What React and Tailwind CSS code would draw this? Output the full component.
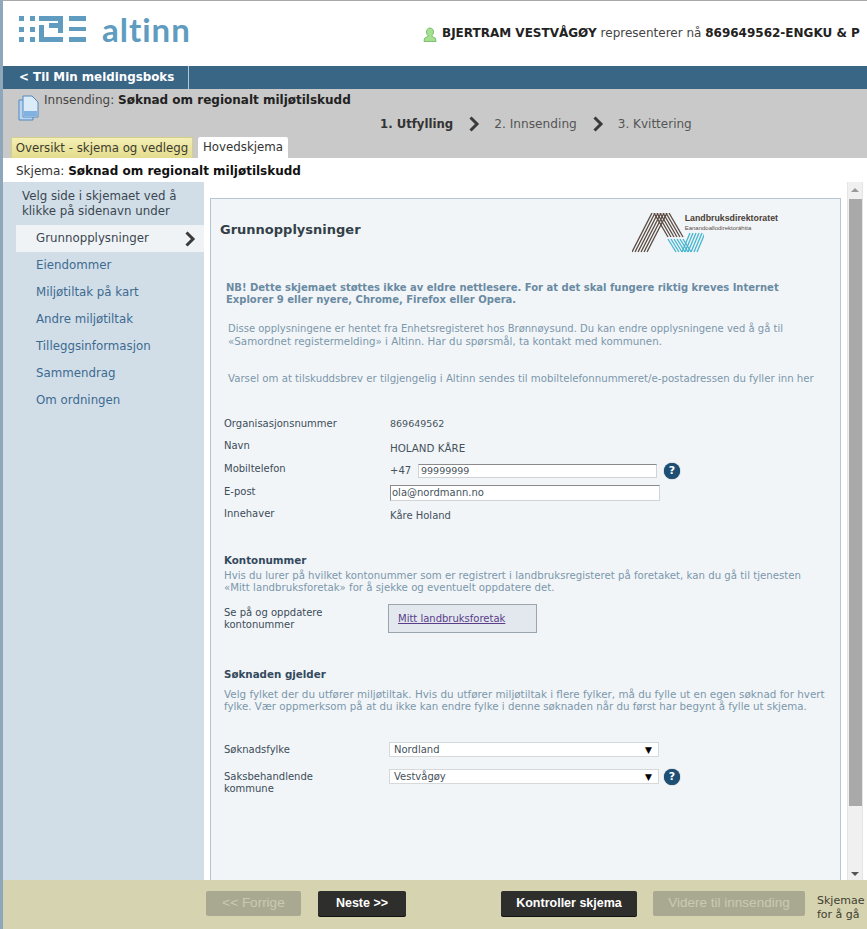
import React from "react";

const menu = ["Eiendommer", "Miljøtiltak på kart", "Andre miljøtiltak", "Tilleggsinformasjon", "Sammendrag", "Om ordningen"];

function AltinnMark() {
    return (
        <svg width="67" height="26" viewBox="0 0 67 26" fill="#5f9cbf">
            {[0, 11, 21].map((y) => (
                <g key={y}>
                    <rect x="0" y={y} width="5" height="5" />
                    <rect x="11" y={y} width="5" height="5" />
                </g>
            ))}
            <path d="M20 0h24v17h-5v-5h-9V7h9V5H20zM20 9h5v12h19v5H20z" />
            <rect x="50" y="0" width="17" height="5" />
            <rect x="50" y="11" width="17" height="4" />
            <rect x="50" y="21" width="17" height="5" />
        </svg>
    );
}

function DirektoratMark() {
    const strands = [0, 1, 2, 3, 4, 5];
    return (
        <svg className="shrink-0" width="72" height="40" viewBox="0 0 72 40" fill="none">
            {strands.map((i) => (
                <line key={"a" + i} x1={i * 3} y1="39" x2={20 + i * 3} y2="0" stroke="#5a4a40" strokeWidth="1.3" />
            ))}
            {strands.map((i) => (
                <line key={"b" + i} x1={22 + i * 3} y1="0" x2={36 + i * 3} y2="24" stroke="#5a4a40" strokeWidth="1.3" />
            ))}
            {strands.map((i) => (
                <line key={"c" + i} x1={36 + i * 3} y1="26" x2={44 + i * 3} y2="39" stroke="#45b5cf" strokeWidth="1.3" />
            ))}
            {strands.map((i) => (
                <line key={"d" + i} x1={50 + i * 3} y1="39" x2={58 + i * 3} y2="20" stroke="#45b5cf" strokeWidth="1.3" />
            ))}
        </svg>
    );
}

function Chevron({ className }) {
    return (
        <svg className={`shrink-0 ${className}`} width="12" height="16" viewBox="0 0 12 16" fill="none">
            <path d="M2.500 1.500 9 8l-6.500 6.500" stroke="#3a3a3a" strokeWidth="3" />
        </svg>
    );
}

function HelpIcon() {
    return (
        <span className="flex h-[16px] w-[16px] items-center justify-center rounded-full bg-[#1d4f74] text-[11px] font-bold text-white shadow-[0_0_1px_#0b2c44]">
            ?
        </span>
    );
}

function Row({ label, className, children }) {
    return (
        <div className={`-ml-[2px] flex ${className}`}>
            <div className="w-[166px] shrink-0 text-[10px] leading-[12px] text-[#3d4c59]">{label}</div>
            <div className="flex-1">{children}</div>
        </div>
    );
}

function SelectBox({ value }) {
    return (
        <div className="flex h-[15px] w-[270px] items-center justify-between border border-[#d5d9dc] bg-white pl-[4px] pr-[6px] text-[10px] text-[#46525c]">
            <span>{value}</span>
            <span className="text-[9px] text-black">▼</span>
        </div>
    );
}

function Button({ children, dark, className }) {
    return (
        <div
            className={`mt-[11px] flex h-[25px] shrink-0 items-center justify-center rounded-[2px] font-['Liberation_Sans',sans-serif] ${className} ${
                dark ? "bg-[#2e2e2c] text-[12.5px] font-bold text-white shadow-[0_1px_0_#111]" : "bg-[#a9a992] text-[13.500px] text-[#c9c9b3]"
            }`}
        >
            {children}
        </div>
    );
}

export default function App() {
    return (
        <div className="flex h-[929px] w-[867px] flex-col overflow-hidden border-l-[3px] border-t-[1px] border-l-[#8fa7bb] border-t-[#a8a8a8] bg-white font-['DejaVu_Sans',sans-serif] text-[11px]">
            {/* Header */}
            <div className="flex h-[65px] shrink-0 items-start whitespace-nowrap">
                <div className="flex w-[420px] shrink-0 items-start">
                    <div className="ml-[16px] mt-[15px]">
                        <AltinnMark />
                    </div>
                    <span className="ml-[16px] mt-[8px] font-['Lato',sans-serif] text-[33px] font-bold leading-[40px] tracking-[1px] text-[#5f9cbf]">
                        altinn
                    </span>
                </div>
                <svg className="mt-[26px] shrink-0" width="14" height="15" viewBox="0 0 14 15">
                    <path d="M7 1c2.400 0 3.500 1.800 3.500 4 0 1.600-.7 2.800-1.400 3.400v1l3.400 1.800.5 3.300H1l.5-3.300 3.400-1.800v-1C4.200 7.800 3.500 6.600 3.500 5c0-2.200 1.100-4 3.500-4z" fill="#a5e092" stroke="#6cb35a" strokeWidth=".8" />
                </svg>
                <div className="ml-[5px] mt-[25px] text-[12px] leading-[15px] text-[#444]">
                    <b className="text-[#222]">BJERTRAM VESTVÅGØY</b> representerer nå <b className="text-[#222]">869649562-ENGKU &amp; P</b>
                </div>
            </div>

            {/* Blue bar */}
            <div className="flex h-[23px] shrink-0 items-stretch bg-[#3a6686] pl-[1px]">
                <div className="flex w-[185px] items-center border-r border-[#b7c8d5] pl-[15px] pt-[1px] text-[11.85px] font-bold text-white">
                    &lt; Til Min meldingsboks
                </div>
            </div>

            {/* Gray band */}
            <div className="flex h-[69px] shrink-0 flex-col justify-between bg-[#c9c9c9]">
                <div className="flex">
                    <svg className="ml-[15px] mt-[6px] shrink-0" width="22" height="26" viewBox="0 0 22 26" fill="none">
                        <path d="M1 5h10l4 4v16H1z" fill="#b9d6f0" stroke="#5088bd" />
                        <path d="M5 1h9l6 6v15H5z" fill="#dcebf8" stroke="#5088bd" />
                        <rect x="6" y="16" width="13" height="5" fill="#7fb2e0" />
                    </svg>
                    <div className="ml-[4px] mt-[4px] text-[12px] leading-[15px] text-[#444]">
                        <div>
                            Innsending: <b className="text-[#222]">Søknad om regionalt miljøtilskudd</b>
                        </div>
                        <div className="ml-[336px] mt-[8px] flex h-[16px] items-center text-[#555]">
                            <b className="text-[11.7px] text-[#333]">1. Utfylling</b>
                            <Chevron className="ml-[15px] mr-[14px]" />
                            <span className="text-[12.2px]">2. Innsending</span>
                            <Chevron className="ml-[15px] mr-[14px]" />
                            <span>3. Kvittering</span>
                        </div>
                    </div>
                </div>
                <div className="flex h-[21px] items-end gap-[5px] pl-[8px] text-[11.8px] leading-[15px]">
                    <div className="flex h-[21px] w-[182px] items-center justify-center rounded-t-[2px] border border-b-0 border-[#d6cf8a] bg-gradient-to-b from-[#f4efb4] to-[#e4dc8e] text-[#3c3c2e]">
                        Oversikt - skjema og vedlegg
                    </div>
                    <div className="flex h-[21px] w-[90px] items-center justify-center rounded-t-[2px] bg-white text-[#333]">
                        Hovedskjema
                    </div>
                </div>
            </div>

            {/* Schema title */}
            <div className="flex h-[24px] shrink-0 items-center pl-[13px] pt-[1px] text-[12px] text-[#333]">
                <span>
                    Skjema: <b className="text-[#111]">Søknad om regionalt miljøtilskudd</b>
                </span>
            </div>

            {/* Main */}
            <div className="flex min-h-0 flex-1">
                {/* Sidebar */}
                <div className="w-[201px] shrink-0 bg-[#d1dee8] pt-[7px] text-[11.8px]">
                    <div className="pl-[19px] leading-[15px] text-[#3b4650]">
                        Velg side i skjemaet ved å
                        <br />
                        klikke på sidenavn under
                    </div>
                    <div className="ml-[13px] mt-[6px] flex h-[27px] items-center justify-between bg-[#f0f3f6] pl-[20px] pr-[8px] text-[#3b4650]">
                        <span>Grunnopplysninger</span>
                        <Chevron />
                    </div>
                    {menu.map((item) => (
                        <div key={item} className="flex h-[27px] items-center pl-[33px] text-[#3d6a90]">
                            {item}
                        </div>
                    ))}
                </div>

                {/* Form panel */}
                <div className="ml-[6px] mt-[16px] w-[631px] shrink-0 border border-b-0 border-[#b5c7d4] bg-[#f1f5f8] pl-[15px] text-[10px] leading-[12px]">
                    <div className="flex h-[63px] items-start justify-between pr-[62px]">
                        <div className="-ml-[6px] mt-[23px] text-[13px] font-bold leading-[16px] text-[#333f47]">Grunnopplysninger</div>
                        <div className="mt-[14px] flex">
                            <DirektoratMark />
                            <div className="-ml-[19px] whitespace-nowrap font-['Liberation_Sans',sans-serif]">
                                <div className="text-[8.8px] font-bold leading-[11px] text-[#4a3d36]">Landbruksdirektoratet</div>
                                <div className="text-[6px] leading-[8px] text-[#5c4f48]">Eanandoallodirektoráhtta</div>
                            </div>
                        </div>
                    </div>

                    <div className="mt-[20px] font-bold text-[#6a8aa2]">
                        NB! Dette skjemaet støttes ikke av eldre nettlesere. For at det skal fungere riktig kreves Internet
                        <br />
                        Explorer 9 eller nyere, Chrome, Firefox eller Opera.
                    </div>
                    <div className="ml-[2px] mt-[17px] text-[#7c97ab]">
                        <div>Disse opplysningene er hentet fra Enhetsregisteret hos Brønnøysund. Du kan endre opplysningene ved å gå til</div>
                        <div className="text-[10.3px]">«Samordnet registermelding» i Altinn. Har du spørsmål, ta kontakt med kommunen.</div>
                    </div>
                    <div className="ml-[2px] mt-[26px] text-[10.2px] text-[#7c97ab]">
                        Varsel om at tilskuddsbrev er tilgjengelig i Altinn sendes til mobiltelefonnummeret/e-postadressen du fyller inn her
                    </div>

                    <Row label="Organisasjonsnummer" className="mt-[33px] h-[22px]">
                        <span className="text-[9.5px] text-[#46525c]">869649562</span>
                    </Row>
                    <Row label="Navn" className="h-[23px]">
                        <span className="relative top-[2px] text-[10.3px] text-[#46525c]">HOLAND KÅRE</span>
                    </Row>
                    <Row label="Mobiltelefon" className="h-[23px]">
                        <div className="flex items-center">
                            <span className="w-[28px] text-[#46525c]">+47</span>
                            <div className="flex h-[14px] w-[239px] items-center border border-[#d0d4d8] border-t-[#8a8a8a] bg-white pl-[2px] text-[9.5px] text-[#46525c]">99999999</div>
                            <span className="ml-[7px]"><HelpIcon /></span>
                        </div>
                    </Row>
                    <Row label="E-post" className="h-[22px]">
                        <div className="-mt-[1px] flex h-[16px] w-[270px] items-center border border-[#d0d4d8] border-l-[#8a8a8a] border-t-[#8a8a8a] bg-white pl-[1px] text-[#46525c]">ola@nordmann.no</div>
                    </Row>
                    <Row label="Innehaver" className="h-[23px]">
                        <span className="relative top-[2px] text-[#46525c]">Kåre Holand</span>
                    </Row>

                    <div className="-ml-[2px] mt-[23px] text-[10.3px] font-bold text-[#34495e]">Kontonummer</div>
                    <div className="-ml-[2px] mt-[4px] text-[10.2px] text-[#7c97ab]">
                        Hvis du lurer på hvilket kontonummer som er registrert i landbruksregisteret på foretaket, kan du gå til tjenesten
                        <br />
                        «Mitt landbruksforetak» for å sjekke og eventuelt oppdatere det.
                    </div>
                    <div className="-ml-[2px] mt-[10px] flex">
                        <div className="mt-[3px] w-[164px] shrink-0 text-[#3d4c59]">
                            Se på og oppdatere
                            <br />
                            kontonummer
                        </div>
                        <div className="flex h-[29px] w-[149px] items-center border border-[#9aa5ae] bg-[#e2e8ee] pl-[9px] text-[#5b3d8a] underline">
                            Mitt landbruksforetak
                        </div>
                    </div>

                    <div className="-ml-[2px] mt-[35px] text-[10.3px] font-bold text-[#34495e]">Søknaden gjelder</div>
                    <div className="-ml-[2px] mt-[8px] text-[#7c97ab]">
                        <div className="text-[10.38px]">Velg fylket der du utfører miljøtiltak. Hvis du utfører miljøtiltak i flere fylker, må du fylle ut en egen søknad for hvert</div>
                        <div className="text-[10.25px]">fylke. Vær oppmerksom på at du ikke kan endre fylke i denne søknaden når du først har begynt å fylle ut skjema.</div>
                    </div>
                    <div className="-ml-[2px] mt-[30px] flex h-[27px]">
                        <div className="mt-[2px] w-[165px] shrink-0 text-[#3d4c59]">Søknadsfylke</div>
                        <SelectBox value="Nordland" />
                    </div>
                    <div className="-ml-[2px] flex">
                        <div className="mt-[2px] w-[165px] shrink-0 text-[#3d4c59]">
                            Saksbehandlende
                            <br />
                            kommune
                        </div>
                        <SelectBox value="Vestvågøy" />
                        <span className="ml-[5px]"><HelpIcon /></span>
                    </div>
                </div>

                {/* Scrollbar */}
                <div className="ml-[6px] flex w-[16px] shrink-0 flex-col items-center border-x border-[#e4e4e4] bg-[#f0f0f0]">
                    <span className="mt-[6px] h-0 w-0 border-x-[4px] border-b-[4px] border-x-transparent border-b-[#9a9a9a]" />
                    <div className="mt-[7px] h-[607px] w-[13px] bg-[#a9a9a9]" />
                    <span className="mb-[4px] mt-auto h-0 w-0 border-x-[4px] border-t-[4px] border-x-transparent border-t-[#555]" />
                </div>
            </div>

            {/* Footer */}
            <div className="flex h-[49px] shrink-0 items-start whitespace-nowrap bg-[#d6d3b0] pl-[203px]">
                <Button className="w-[95px]">&lt;&lt; Forrige</Button>
                <Button dark className="ml-[17px] w-[88px]">Neste &gt;&gt;</Button>
                <Button dark className="ml-[95px] w-[136px]">Kontroller skjema</Button>
                <Button className="ml-[16px] w-[152px]">Videre til innsending</Button>
                <div className="ml-[12px] mt-[14px] text-[11px] leading-[14px] text-[#3f3f30]">
                    Skjemae
                    <br />
                    for å gå
                </div>
            </div>
        </div>
    );
}
